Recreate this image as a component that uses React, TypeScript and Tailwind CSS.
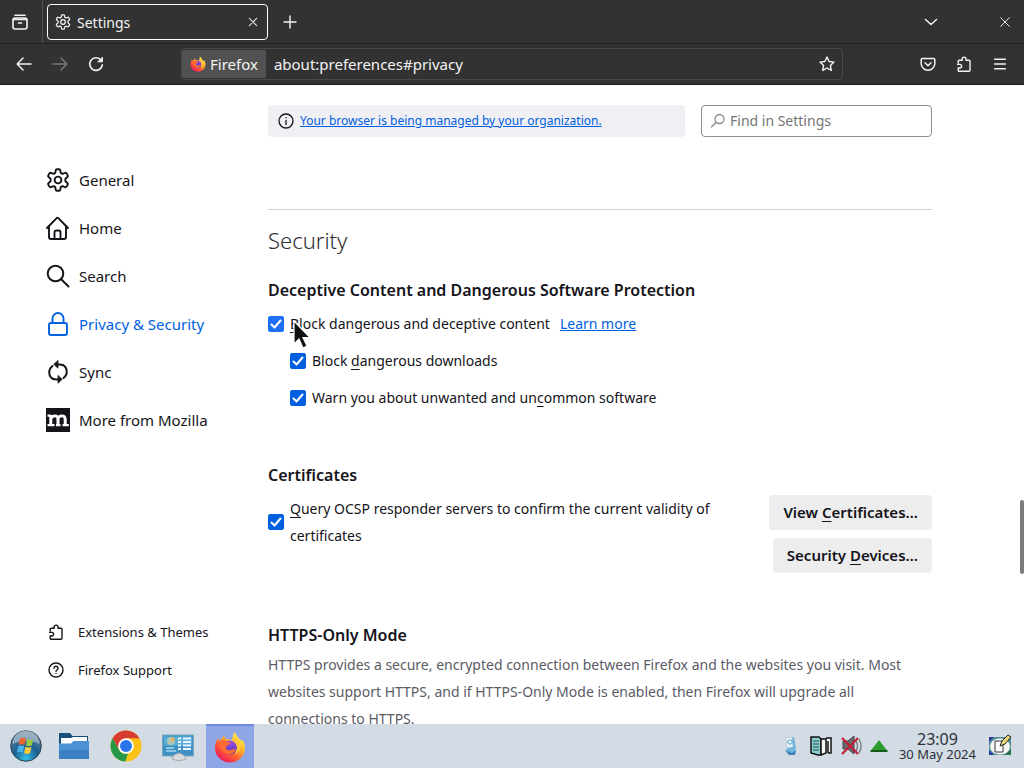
import { useState } from "react";
import type { ReactNode } from "react";
import clsx from "clsx";

type IconProps = { className?: string };

function Stroke({ className, size = 16, width = 1.25, children }: IconProps & { size?: number; width?: number; children: ReactNode }) {
  return (
    <svg
      className={className}
      viewBox={`0 0 ${size} ${size}`}
      fill="none"
      stroke="currentColor"
      strokeWidth={width}
      strokeLinecap="round"
      strokeLinejoin="round"
      aria-hidden="true"
    >
      {children}
    </svg>
  );
}

function GearIcon({ className }: IconProps) {
  return (
    <Stroke className={className} size={24} width={1.9}>
      <path d="M11 1.200h2a1.300 1.300 0 0 1 1.300 1.100l.4 2.600 1.700 1 2.600-1a1.300 1.300 0 0 1 1.600.5l1.100 1.900a1.300 1.300 0 0 1-.3 1.700l-2 1.700v2.600l2 1.700a1.300 1.300 0 0 1 .3 1.700l-1.100 1.900a1.300 1.300 0 0 1-1.600.5l-2.600-1-1.700 1-.4 2.600a1.300 1.300 0 0 1-1.300 1.100h-2a1.300 1.300 0 0 1-1.300-1.100l-.4-2.600-1.700-1-2.600 1a1.300 1.300 0 0 1-1.600-.5l-1.100-1.900a1.300 1.300 0 0 1 .3-1.700l2-1.700v-2.600l-2-1.700a1.300 1.300 0 0 1-.3-1.700l1.100-1.900a1.300 1.300 0 0 1 1.600-.5l2.600 1 1.700-1 .4-2.600A1.300 1.300 0 0 1 11 1.200z" />
      <circle cx="12" cy="12" r="3.400" />
    </Stroke>
  );
}

function HomeIcon({ className }: IconProps) {
  return (
    <Stroke className={className} size={24} width={1.9}>
      <path d="M1 12 10.400 2.300a1.500 1.500 0 0 1 2.200 0L22 12" />
      <path d="M3 10.500V21a2 2 0 0 0 2 2h13a2 2 0 0 0 2-2V10.500" />
      <path d="M8.500 23v-6.500a2 2 0 0 1 2-2h2a2 2 0 0 1 2 2V23" />
    </Stroke>
  );
}

function SearchIcon({ className }: IconProps) {
  return (
    <Stroke className={className} size={24} width={2}>
      <circle cx="9.500" cy="9.500" r="7.800" />
      <path d="M15.200 15.200 22.500 22.500" />
    </Stroke>
  );
}

function LockIcon({ className }: IconProps) {
  return (
    <Stroke className={className} size={24} width={1.9}>
      <rect x="3" y="11" width="18" height="12" rx="2" />
      <path d="M6.500 11V6.500a5.500 5.500 0 0 1 11 0V11" />
    </Stroke>
  );
}

function SyncIcon({ className }: IconProps) {
  return (
    <Stroke className={className} size={24} width={2}>
      <path d="M7 19.200A8 8 0 0 1 6.500 6" />
      <path d="M17 4.800A8 8 0 0 1 17.500 18" />
      <path d="M10 4.500h3.500a8 8 0 0 1 3.500.8M14 19.500h-3.500a8 8 0 0 1-3.500-.8" />
      <path d="M12 .800v7.400L8 4.500zM12 15.800v7.400l4-3.700z" fill="currentColor" strokeWidth="0.8" />
    </Stroke>
  );
}

function MozillaIcon({ className }: IconProps) {
  return (
    <svg className={className} viewBox="0 0 24 24" aria-hidden="true">
      <rect width="24" height="24" fill="#15141a" />
      <g fill="none" stroke="#fff">
        <path d="M4.800 17.500V7M12 17.500V11M19.200 17.500V11" strokeWidth="3" />
        <path d="M5 10.500c1.200-3.200 7-4 7 1M12 10.500c1.200-3.200 7.200-4 7.200 1" strokeWidth="2.800" />
        <path d="M1.500 7.600H5M1.500 17.200h7M10 17.200h4.500M16.500 17.200h6.300" strokeWidth="2.200" />
      </g>
    </svg>
  );
}

function PuzzleIcon({ className }: IconProps) {
  return (
    <Stroke className={className} width={1.4}>
      <path d="M2.200 7V5.200a1 1 0 0 1 1-1h3V3a1.900 1.900 0 0 1 3.800 0v1.200h3a1 1 0 0 1 1 1v9a1 1 0 0 1-1 1H3.200a1 1 0 0 1-1-1V12h1.600a1.700 1.700 0 0 0 0-3.600H1.600" />
    </Stroke>
  );
}

function HelpIcon({ className }: IconProps) {
  return (
    <Stroke className={className} width={1.4}>
      <circle cx="8" cy="8" r="7" />
      <path d="M6 6.300a2 2 0 1 1 3 1.700c-.7.4-1 .7-1 1.400M8 11.500v.1" />
    </Stroke>
  );
}

function InfoIcon({ className }: IconProps) {
  return (
    <Stroke className={className} width={1.3}>
      <circle cx="8" cy="8" r="7" />
      <path d="M8 7.300v4.200M8 4.600v.1" />
    </Stroke>
  );
}

function FirefoxIcon({ className }: IconProps) {
  return (
    <svg className={className} viewBox="0 0 32 32" aria-hidden="true">
      <defs>
        <linearGradient id="fx-body" x1="0.85" y1="0.1" x2="0.2" y2="0.95">
          <stop offset="0" stopColor="#fff04a" />
          <stop offset="0.35" stopColor="#ffb02a" />
          <stop offset="0.65" stopColor="#ff5a35" />
          <stop offset="1" stopColor="#ee1560" />
        </linearGradient>
        <linearGradient id="fx-globe" x1="0.5" y1="0" x2="0.5" y2="1">
          <stop offset="0" stopColor="#a04be8" />
          <stop offset="1" stopColor="#4b3bb8" />
        </linearGradient>
      </defs>
      <path
        d="M19.500 1c3 2.200 3.800 4 4.500 6 1.800.6 3 2 3.700 3.500l.5-2C30.400 11.500 31 14 31 17a15 14.500 0 0 1-30 0c0-4 1.200-7.500 3.300-10L5 10c.8-1 1.600-1.500 2.500-1.800C8.300 6.500 9 5.300 10.500 4l.3 4c3.700-.4 5 .4 6.700 1.500C18.800 6.500 19.700 4 19.500 1z"
        fill="url(#fx-body)"
      />
      <circle cx="16" cy="16.500" r="7" fill="url(#fx-globe)" />
      <path d="M5 10.500c3-2 6-1.500 8 .3 1.200.8 3.200.8 4 1-1 2-3 2.300-4.500 3.200-1.200.8-.8 3.500 1.500 4.200 3 .8 5-2 8-.7-2 4.500-7.500 6-11.500 3.500C6.500 19.500 5 15 5 10.500z" fill="#ff6a35" />
      <path d="M17.500 9.500c6 2 7 9 3.500 13.500 4-1.500 6-5 5.500-8.500-.5-4-4.500-6-6.500-7.500z" fill="#ffc43a" />
    </svg>
  );
}

function StartIcon({ className }: IconProps) {
  return (
    <svg className={className} viewBox="0 0 32 32" aria-hidden="true">
      <defs>
        <radialGradient id="orb" cx="0.5" cy="0.9" r="0.9">
          <stop offset="0" stopColor="#35c0e8" />
          <stop offset="0.45" stopColor="#1b5f91" />
          <stop offset="1" stopColor="#6b8598" />
        </radialGradient>
      </defs>
      <circle cx="16" cy="16" r="15.300" fill="url(#orb)" stroke="#2a4152" strokeWidth="1" />
      <path d="M2.500 14a13.500 13.500 0 0 1 27 0c-7-4-18-4-27 0z" fill="#d6e2e8" opacity="0.5" />
      <path d="M10 8.500c2-1.200 4-1 6 .1L14.500 15c-2-1-4-1-6-.1z" fill="#ef6530" />
      <path d="M17.200 9.200c2 1 4 1 6 .1L21.800 15.500c-2 1-4 .9-6 0z" fill="#97c945" />
      <path d="M8.200 16.200c2-1 4-.9 6 .1l-1.500 6.200c-2-1-4-1.100-6-.1z" fill="#48b6ec" />
      <path d="M15.500 16.800c2 1 4 1 6 .1L20 23.200c-2 1-4 .9-6-.1z" fill="#fcc938" />
    </svg>
  );
}

function FolderIcon({ className }: IconProps) {
  return (
    <svg className={className} viewBox="0 0 32 32" aria-hidden="true">
      <path d="M1 3h11l2.500 3H30v8H1z" fill="#194f7d" />
      <path d="M3 8h10l2-1h14v10H3z" fill="#fff" />
      <path d="M1 13.500h12l2.500-2.500H31v18H1z" fill="#4a92d3" />
      <path d="M1 20h30v9H1z" fill="#3a7fc0" />
    </svg>
  );
}

function ChromeIcon({ className }: IconProps) {
  return (
    <svg className={className} viewBox="0 0 32 32" aria-hidden="true">
      <circle cx="16" cy="16" r="15.500" fill="#fbc116" />
      <path d="M2.600 8.200A15.500 15.500 0 0 1 29.400 8.200H16L9.200 20z" fill="#d93b30" />
      <path d="M2.600 8.200 9.300 19.900a7.800 7.800 0 0 0 8.700 3.600L15.400 31.500A15.500 15.500 0 0 1 2.600 8.200z" fill="#279847" />
      <circle cx="16" cy="16" r="7.800" fill="#fff" />
      <circle cx="16" cy="16" r="6" fill="#2a73e8" />
    </svg>
  );
}

function MonitorIcon({ className }: IconProps) {
  return (
    <svg className={className} viewBox="0 0 32 32" aria-hidden="true">
      <rect x="0.500" y="5" width="31" height="21" fill="#3d91c4" stroke="#7ba7bd" />
      <path d="M2 6.500h28v9H2z" fill="#5aaed7" />
      <circle cx="9" cy="11" r="4" fill="#b3c7ae" />
      <path d="M9 11V7a4 4 0 0 1 4 4z" fill="#e1b269" />
      <path d="M16 8.500h3M21 8.500h8M16 12h3M21 12h8M16 15.500h3M21 15.500h8M16 19h3M21 19h8" stroke="#e8f7ff" strokeWidth="1.800" />
      <path d="M4 18h8M4 21h10" stroke="#a6d6ec" strokeWidth="1.500" />
      <path d="M10 29c0-3 3-5 7-6 3 1 6 2 7 6-4 2-10 2-14 0z" fill="#d5d8dc" stroke="#92999f" strokeWidth="0.700" />
    </svg>
  );
}

const NAV = [
  { label: "General", Icon: GearIcon },
  { label: "Home", Icon: HomeIcon },
  { label: "Search", Icon: SearchIcon },
  { label: "Privacy & Security", Icon: LockIcon },
  { label: "Sync", Icon: SyncIcon },
  { label: "More from Mozilla", Icon: MozillaIcon },
];

const TASKS = [
  { label: "Files", Icon: FolderIcon },
  { label: "Chrome", Icon: ChromeIcon },
  { label: "Control Panel", Icon: MonitorIcon },
  { label: "Firefox", Icon: FirefoxIcon },
];

// Access key letter, underlined like in native dialogs
function Key({ children }: { children: string }) {
  return <span className="underline decoration-1 underline-offset-3">{children}</span>;
}

function Check({ id, light, children }: { id: string; light?: boolean; children: ReactNode }) {
  const [checked, setChecked] = useState(true);
  return (
    <div className="flex items-center gap-1.5">
      <span className="grid h-4 w-4 shrink-0">
        <input
          id={id}
          type="checkbox"
          checked={checked}
          onChange={(e) => setChecked(e.target.checked)}
          className={clsx(
            "col-start-1 row-start-1 h-4 w-4 appearance-none rounded-xs border border-[#8f8f9d]",
            light ? "checked:border-[#1f6ff5] checked:bg-[#1f6ff5]" : "checked:border-[#0060df] checked:bg-[#0060df]"
          )}
        />
        {checked && (
          <svg
            className="pointer-events-none col-start-1 row-start-1 h-4 w-4"
            viewBox="0 0 16 16"
            fill="none"
            stroke="#fff"
            strokeWidth="2"
            strokeLinecap="round"
            strokeLinejoin="round"
          >
            <path d="m3.500 8.500 3 3L12.500 4.500" />
          </svg>
        )}
      </span>
      <label htmlFor={id}>{children}</label>
    </div>
  );
}

function BrowserChrome() {
  return (
    <header className="shrink-0 border-b border-[#1c1c1c] bg-[#323232] text-[#f4f4f4]">
      <div className="flex h-11 items-center border-b border-[#202020]">
        <button aria-label="Firefox View" className="flex h-full w-[43px] items-center border-r border-[#505050] pl-3">
          <Stroke className="h-4 w-4" width={1.6}>
            <path d="M3 1.200h10" />
            <rect x="1" y="4" width="14" height="11" rx="2" />
            <path d="M1.500 5.500h13M6.500 9h3" />
          </Stroke>
        </button>
        <div className="ml-1 flex h-9 w-[221px] items-center rounded border border-white pr-1 pl-[7px]">
          <GearIcon className="h-4 w-4" />
          <span className="ml-1.5 flex-1 pt-0.5 text-sm">Settings</span>
          <button aria-label="Close tab" className="p-1">
            <Stroke className="h-3 w-3" width={1.4}>
              <path d="m3 3 10 10M13 3 3 13" />
            </Stroke>
          </button>
        </div>
        <button aria-label="New tab" className="ml-3.5">
          <Stroke className="h-4 w-4" width={1.4}>
            <path d="M8 2v12M2 8h12" />
          </Stroke>
        </button>
        <button aria-label="List all tabs" className="ml-auto">
          <Stroke className="h-4 w-4" width={1.5}>
            <path d="m2.500 5.500 5.500 5 5.500-5" />
          </Stroke>
        </button>
        <button aria-label="Close window" className="mr-3.5 ml-[61px]">
          <Stroke className="h-2.5 w-2.5" width={1.5}>
            <path d="m1 1 14 14M15 1 1 15" />
          </Stroke>
        </button>
      </div>
      <div className="flex h-10 items-center pl-4">
        <button aria-label="Back">
          <Stroke className="h-4 w-4" width={1.5}>
            <path d="M15 8H1.500M7 2 1.200 8 7 14" />
          </Stroke>
        </button>
        <button aria-label="Forward" className="ml-5 text-[#777]" disabled>
          <Stroke className="h-4 w-4" width={1.5}>
            <path d="M1 8h13.500M9 2l5.800 6L9 14" />
          </Stroke>
        </button>
        <button aria-label="Reload" className="ml-5">
          <Stroke className="h-4 w-4" width={1.6}>
            <path d="M13 4.200A6.300 6.300 0 1 0 14.300 8.800" />
            <path d="M14.500 1.500v4.300h-4.300z" fill="currentColor" strokeWidth="1" />
          </Stroke>
        </button>
        <div className="ml-[77px] flex h-8 flex-1 items-center rounded border border-[#484848]">
          <div className="flex h-7 items-center gap-1 rounded-xs bg-[#515151] pr-2 pl-2">
            <FirefoxIcon className="h-4 w-4" />
            <span className="text-[15px]">Firefox</span>
          </div>
          <input
            aria-label="Address"
            defaultValue="about:preferences#privacy"
            className="min-w-0 flex-1 bg-transparent px-2 text-[15px] outline-none"
          />
          <button aria-label="Bookmark this page" className="mr-[7px]">
            <Stroke className="h-4 w-4" width={1.4}>
              <path d="m8 1 2.100 4.500 4.900.6-3.600 3.400.9 4.900L8 12l-4.300 2.400.9-4.900L1 6.100l4.900-.6z" />
            </Stroke>
          </button>
        </div>
        <div className="ml-[77px] flex items-center gap-5 pr-4">
          <button aria-label="Save to Pocket">
            <Stroke className="h-4 w-4" width={1.5}>
              <path d="M2.500 2.500h11a1.300 1.300 0 0 1 1.300 1.300V7.500a6.800 6.800 0 0 1-13.600 0V3.800a1.300 1.300 0 0 1 1.300-1.300z" />
              <path d="m5 6.800 3 2.900 3-2.900" />
            </Stroke>
          </button>
          <button aria-label="Extensions">
            <PuzzleIcon className="h-4 w-4" />
          </button>
          <button aria-label="Menu">
            <Stroke className="h-4 w-4" width={1.4}>
              <path d="M2.500 3.200h11M2.500 8h11M2.500 12.800h11" />
            </Stroke>
          </button>
        </div>
      </div>
    </header>
  );
}

function Sidebar() {
  return (
    <nav className="flex w-[268px] shrink-0 flex-col pt-[71px] pb-[35px] text-[15px]">
      {NAV.map(({ label, Icon }) => (
        <a
          key={label}
          href="#"
          className={clsx("flex h-12 items-center gap-[9px] pl-[46px]", label === "Privacy & Security" && "text-[#0061e0]")}
        >
          <Icon className="h-6 w-6" />
          {label}
        </a>
      ))}
      <div className="mt-auto text-[13px]">
        <a href="#" className="flex h-[38px] items-center gap-3.5 pl-12">
          <PuzzleIcon className="h-4 w-4" />
          Extensions &amp; Themes
        </a>
        <a href="#" className="flex h-[38px] items-center gap-3.5 pl-12">
          <HelpIcon className="h-4 w-4" />
          Firefox Support
        </a>
      </div>
    </nav>
  );
}

function Preferences() {
  return (
    <main className="max-w-[664px] flex-1 pt-5">
      <div className="flex h-8 gap-4">
        <div className="flex flex-1 items-center gap-1.5 rounded bg-[#f0f0f4] px-2.5">
          <InfoIcon className="h-4 w-4" />
          <a href="#" className="text-xs text-[#0061e0] underline">
            Your browser is being managed by your organization.
          </a>
        </div>
        <div className="flex w-[231px] items-center gap-1 rounded border border-[#8f8f9d] px-2">
          <Stroke className="h-4 w-4 text-[#8a8a8a]" width={1.3}>
            <circle cx="9.500" cy="6" r="4.500" />
            <path d="m6.200 9.300-4.700 4.700" />
          </Stroke>
          <input
            aria-label="Find in Settings"
            placeholder="Find in Settings"
            className="min-w-0 flex-1 text-sm outline-none placeholder:text-[#757575]"
          />
        </div>
      </div>

      <hr className="mt-[72px] border-[#cfcfd2]" />
      <h1 className="mt-4 text-[22px] leading-7 font-light text-[#2e2d33]">Security</h1>

      <h2 className="mt-6 text-base font-semibold">Deceptive Content and Dangerous Software Protection</h2>
      <div className="mt-2 flex flex-col gap-2.5">
        <div className="flex gap-2.5">
          <div className="relative">
            <Check id="block-content" light>
              <Key>B</Key>lock dangerous and deceptive content
            </Check>
            {/* mouse pointer */}
            <svg className="pointer-events-none absolute top-2.5 left-6 h-8 w-5" viewBox="0 0 20 32">
              <path d="M2 1v23l5-5 4 9 4-2-4-8.500h7z" fill="#111" stroke="#fff" strokeWidth="1.200" />
            </svg>
          </div>
          <a href="#" className="text-[#0061e0] underline">
            Learn more
          </a>
        </div>
        <div className="flex flex-col gap-2.5 pl-[22px]">
          <Check id="block-downloads">
            Block <Key>d</Key>angerous downloads
          </Check>
          <Check id="warn-unwanted">
            Warn you about unwanted and un<Key>c</Key>ommon software
          </Check>
        </div>
      </div>

      <h2 className="mt-[52px] text-base font-semibold">Certificates</h2>
      <div className="mt-2 flex items-start justify-between gap-10">
        <Check id="ocsp">
          <Key>Q</Key>uery OCSP responder servers to confirm the current validity of certificates
        </Check>
        <div className="flex shrink-0 flex-col items-end gap-2">
          <button className="h-[35px] rounded bg-[#ededee] px-3.5 text-[15px] font-semibold">
            View <Key>C</Key>ertificates…
          </button>
          <button className="h-[35px] rounded bg-[#ededee] px-3.5 text-[15px] font-semibold">
            Security <Key>D</Key>evices…
          </button>
        </div>
      </div>

      <h2 className="mt-[50px] text-base font-semibold">HTTPS-Only Mode</h2>
      <p className="mt-1 text-[#5b5b66]">
        HTTPS provides a secure, encrypted connection between Firefox and the websites you visit. Most websites support
        HTTPS, and if HTTPS-Only Mode is enabled, then Firefox will upgrade all connections to HTTPS.
      </p>
    </main>
  );
}

function Taskbar() {
  return (
    <footer className="flex h-11 shrink-0 items-center bg-[#d3dce5] text-[#2b3036]">
      <div className="flex h-full items-center gap-1 pl-1.5">
        <button aria-label="Start" className="flex w-10 justify-center">
          <StartIcon className="h-8 w-8" />
        </button>
        {TASKS.map(({ label, Icon }) => (
          <button
            key={label}
            aria-label={label}
            className={clsx(
              "flex h-full w-12 items-center justify-center",
              label === "Firefox" && "border-t-2 border-[#6f8be0] bg-[#8fa6e6]"
            )}
          >
            <Icon className="h-8 w-8" />
          </button>
        ))}
      </div>
      <div className="ml-auto flex items-center pr-3">
        <svg className="h-5 w-5" viewBox="0 0 20 20">
          <path d="M5 2 13 1l2 11-2 7H8l-4-4 2-2z" fill="#70b5dc" />
          <path d="m5 2 6-1 1 10-6 1z" fill="#eaf6fb" stroke="#a8b9c3" strokeWidth="0.500" />
          <circle cx="9" cy="6" r="2.200" fill="none" stroke="#4b9bc8" />
          <path d="m5 14 6 3 4-3-1 5H8z" fill="#3e83b7" />
        </svg>
        <svg className="ml-2 h-6 w-6" viewBox="0 0 24 24">
          <path d="M2 3h8l2 2v16H9L2 19z" fill="#8bcfd2" stroke="#101010" strokeWidth="1.500" />
          <path d="M12 5h5v14l-5 2zM17 4h5v15h-3" fill="#f6f6f6" stroke="#101010" strokeWidth="1.500" />
          <path d="M4 7h6M4 10h6M4 13h6M4 16h6" stroke="#23484a" />
          <path d="M19 7v12" stroke="#101010" strokeWidth="1.500" />
        </svg>
        <svg className="ml-1.5 h-6 w-6" viewBox="0 0 24 24">
          <path d="M4 7h5l6-5v18l-6-5H4z" fill="#686b70" stroke="#404246" />
          <path d="M17 7q3 5 0 10M20 5q4 7 0 14" fill="none" stroke="#7b8085" strokeWidth="1.500" />
          <path d="m3 4 16 16M19 4 3 20" stroke="#c41d35" strokeWidth="2.200" />
        </svg>
        <svg className="ml-1.5 h-6 w-5" viewBox="0 0 20 24">
          <path d="M10 6 18.500 17h-17z" fill="#2f9c31" />
          <path d="M1.500 17h17" stroke="#165b1b" strokeWidth="2" />
        </svg>
        <div className="ml-2.5 text-center">
          <div className="text-base leading-4">23:09</div>
          <div className="text-[13px] leading-3.5">30 May 2024</div>
        </div>
        <svg className="ml-3 h-6 w-6" viewBox="0 0 24 24">
          <rect x="1" y="3" width="22" height="18" fill="#548f9a" />
          <path d="M1 3h5L1 8zM1 21v-5l5 5z" fill="#263d9b" />
          <path d="M23 21v-6l-6 6z" fill="#2d6f49" />
          <ellipse cx="12" cy="12.500" rx="10" ry="8" fill="#f7f8f4" />
          <path d="M7 7h8v11H7z" fill="#fff" stroke="#333" />
          <path d="m12 12 2-5 6-6 3 2-6 7z" fill="#e9d778" stroke="#222" />
        </svg>
      </div>
    </footer>
  );
}

export default function App() {
  return (
    <div className="flex h-screen flex-col overflow-hidden bg-white font-['Noto_Sans',sans-serif] text-[#15141a]">
      <BrowserChrome />
      <div className="relative flex min-h-0 flex-1 overflow-hidden text-sm leading-[27px]">
        <Sidebar />
        <Preferences />
        <div className="absolute top-[415px] right-0 h-[74px] w-1 rounded-full bg-[#7c7c7c]" />
      </div>
      <Taskbar />
    </div>
  );
}
